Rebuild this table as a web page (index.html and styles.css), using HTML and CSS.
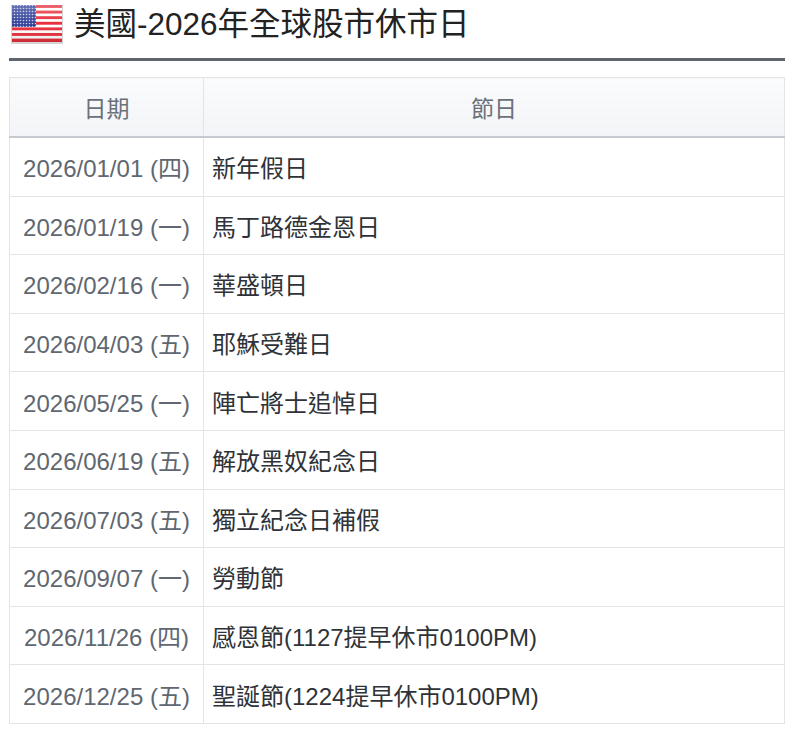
FILE: index.html
```html
<!DOCTYPE html>
<html lang="zh-Hant">
<head>
<meta charset="utf-8">
<title>美國-2026年全球股市休市日</title>
<link rel="stylesheet" href="styles.css">
</head>
<body>
<div class="page">
  <h1 class="title">
    <svg class="flag" width="54" height="40" viewBox="0 0 54 40" aria-hidden="true">
      <defs>
        <pattern id="stars" width="3" height="3" patternUnits="userSpaceOnUse">
          <rect width="3" height="3" fill="#34439a"/>
          <circle cx="1.5" cy="1.5" r="0.8" fill="#c8cde8"/>
        </pattern>
        <linearGradient id="gloss" x1="0" y1="0" x2="0" y2="1">
          <stop offset="0" stop-color="#fff" stop-opacity="0.25"/>
          <stop offset="0.5" stop-color="#fff" stop-opacity="0"/>
          <stop offset="1" stop-color="#000" stop-opacity="0.12"/>
        </linearGradient>
      </defs>
      <rect x="1" y="1" width="52" height="39" fill="#d4d4d4"/>
      <rect x="2" y="1" width="50" height="37" fill="#ffffff"/>
      <rect x="2" y="1" width="50" height="2.9" fill="#e8303c"/>
      <rect x="2" y="6.6" width="50" height="2.9" fill="#e8303c"/>
      <rect x="2" y="12.2" width="50" height="2.9" fill="#e8303c"/>
      <rect x="2" y="17.8" width="50" height="2.9" fill="#e8303c"/>
      <rect x="2" y="23.4" width="50" height="2.9" fill="#e8303c"/>
      <rect x="2" y="29" width="50" height="2.9" fill="#e8303c"/>
      <rect x="2" y="34.6" width="50" height="3.4" fill="#e8303c"/>
      <rect x="2" y="1" width="24" height="22" fill="url(#stars)"/>
      <rect x="2" y="1" width="50" height="37" fill="url(#gloss)"/>
    </svg>
    <span class="title-text">美國-2026年全球股市休市日</span>
  </h1>
  <table class="holidays">
    <thead>
      <tr><th class="col-date">日期</th><th class="col-name">節日</th></tr>
    </thead>
    <tbody>
      <tr><td class="date">2026/01/01 (四)</td><td class="name">新年假日</td></tr>
      <tr><td class="date">2026/01/19 (一)</td><td class="name">馬丁路德金恩日</td></tr>
      <tr><td class="date">2026/02/16 (一)</td><td class="name">華盛頓日</td></tr>
      <tr><td class="date">2026/04/03 (五)</td><td class="name">耶穌受難日</td></tr>
      <tr><td class="date">2026/05/25 (一)</td><td class="name">陣亡將士追悼日</td></tr>
      <tr><td class="date">2026/06/19 (五)</td><td class="name">解放黑奴紀念日</td></tr>
      <tr><td class="date">2026/07/03 (五)</td><td class="name">獨立紀念日補假</td></tr>
      <tr><td class="date">2026/09/07 (一)</td><td class="name">勞動節</td></tr>
      <tr><td class="date">2026/11/26 (四)</td><td class="name">感恩節(1127提早休市0100PM)</td></tr>
      <tr><td class="date">2026/12/25 (五)</td><td class="name">聖誕節(1224提早休市0100PM)</td></tr>
    </tbody>
  </table>
</div>
</body>
</html>
```

FILE: styles.css
```css
html, body {
  margin: 0;
  padding: 0;
  background: #ffffff;
}
body {
  font-family: "Liberation Sans", Arial, "Noto Sans CJK TC", sans-serif;
}
.page {
  width: 776px;
  margin-left: 9px;
  padding-top: 4px;
}
.title {
  display: flex;
  align-items: center;
  gap: 10px;
  margin: 0;
  padding: 0 0 14px 1px;
  border-bottom: 3px solid #5f656c;
  font-weight: normal;
  font-size: 31.5px;
  line-height: 40px;
  color: #222;
}
.flag {
  display: block;
  flex: none;
}
.holidays {
  margin-top: 16px;
  width: 776px;
  border-collapse: collapse;
  font-size: 24px;
  border: 1px solid #e3e4e8;
}
.holidays th {
  height: 58px;
  background: linear-gradient(#fafbfc, #f3f4f7);
  color: #6b7178;
  font-weight: normal;
  font-size: 23px;
  text-align: center;
  border-bottom: 2px solid #c6c9d0;
  border-right: 1px solid #e3e4e8;
  padding: 0;
}
.col-date {
  width: 193px;
}
.holidays td {
  height: 57.6px;
  padding: 0;
  border-top: 1px solid #e3e4e8;
  border-right: 1px solid #e3e4e8;
}
.holidays td.date {
  text-align: center;
  color: #606770;
}
.holidays td.name {
  padding-left: 8px;
  color: #2f3338;
}
```
